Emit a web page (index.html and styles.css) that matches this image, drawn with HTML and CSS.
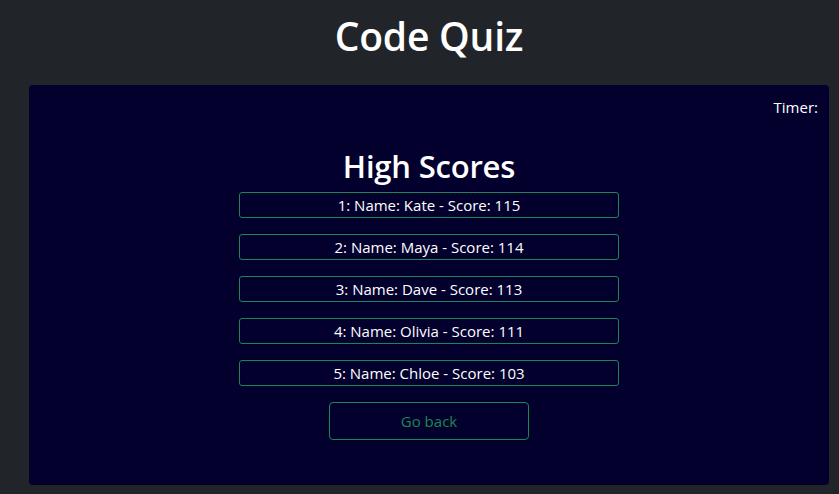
FILE: index.html
```html
<!DOCTYPE html>
<html>
<head>
<meta charset="utf-8">
<link rel="stylesheet" href="styles.css">
</head>
<body>
<header class="header"><h1 class="title">Code Quiz</h1></header>
<main class="card">
  <div class="timer-row"><span class="timer">Timer:</span></div>
  <h2 class="heading">High Scores</h2>
  <ul class="scores">
    <li class="score">1: Name: Kate - Score: 115</li>
    <li class="score">2: Name: Maya - Score: 114</li>
    <li class="score">3: Name: Dave - Score: 113</li>
    <li class="score">4: Name: Olivia - Score: 111</li>
    <li class="score">5: Name: Chloe - Score: 103</li>
  </ul>
  <button class="back">Go back</button>
</main>
</body>
</html>
```
FILE: styles.css
```css
html, body { margin: 0; padding: 0; }
body {
  background: #212529;
  color: #ffffff;
  font-family: "Open Sans", "Noto Sans", sans-serif;
  font-size: 15px;
  padding: 0 10px 0 29px;
  height: 494px;
  box-sizing: border-box;
}
.header { height: 85px; display: flex; justify-content: center; }
.title {
  margin: 10px 0 0;
  font-size: 39px;
  font-weight: 600;
  line-height: 52px;
  letter-spacing: -0.2px;
}
.card {
  background: #03002e;
  border-radius: 4px;
  height: 400px;
  display: flex;
  flex-direction: column;
  align-items: center;
  box-sizing: border-box;
  padding: 11px 0 0;
}
.timer-row {
  align-self: stretch;
  display: flex;
  justify-content: flex-end;
  line-height: 22px;
  padding-right: 11px;
}
.heading {
  margin: 28px 0 0;
  font-size: 31px;
  font-weight: 600;
  line-height: 40px;
  letter-spacing: -0.2px;
}
.scores {
  list-style: none;
  margin: 6px 0 0;
  padding: 0;
  display: flex;
  flex-direction: column;
  gap: 16px;
}
.score {
  width: 380px;
  height: 26px;
  box-sizing: border-box;
  border: 1px solid #198754;
  border-radius: 3px;
  text-align: center;
  line-height: 24px;
}
.back {
  margin: 16px 0 0;
  width: 200px;
  height: 38px;
  background: transparent;
  border: 1px solid #198754;
  border-radius: 4px;
  color: #198754;
  font-family: inherit;
  font-size: 15px;
}
```
